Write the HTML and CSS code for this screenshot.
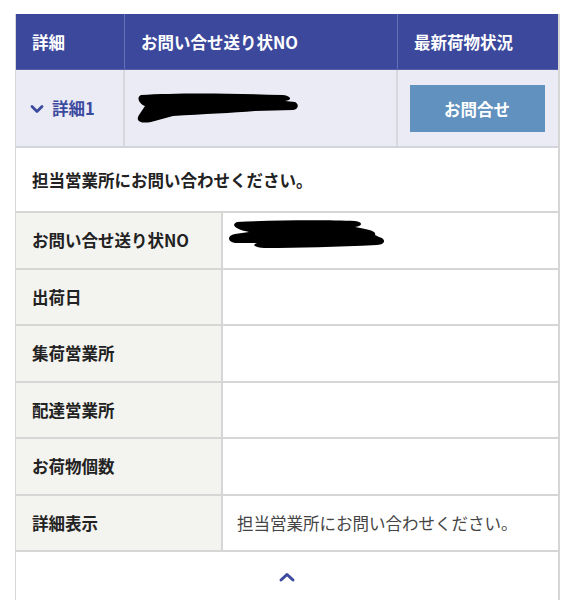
FILE: index.html
```html
<!DOCTYPE html>
<html lang="ja">
<head>
<meta charset="utf-8">
<link rel="stylesheet" href="styles.css">
</head>
<body>
<div class="wrap">
  <div class="head">
    <div class="hc c1">詳細</div>
    <div class="hc c2">お問い合せ送り状NO</div>
    <div class="hc c3">最新荷物状況</div>
  </div>
  <div class="row1">
    <div class="rc c1">
      <svg class="chev" width="14" height="10" viewBox="0 0 14 10"><path d="M2 2.5 L7 7.5 L12 2.5" fill="none" stroke="#3b4a9e" stroke-width="2.8" stroke-linecap="round" stroke-linejoin="round"/></svg>
      <span class="lbl">詳細1</span>
    </div>
    <div class="rc c2">
      <svg class="scrib" width="170" height="32" viewBox="0 0 170 32"><path d="M8 3 C40 1 90 1 150 3 C158 4 160 8 152 9 L162 10 C166 12 166 17 160 18 L122 19 C100 21 70 22 40 24 L18 30 C8 32 2 29 6 23 L12 14 C6 12 3 5 8 3 Z" fill="#000"/></svg>
    </div>
    <div class="rc c3"><button class="btn">お問合せ</button></div>
  </div>
  <div class="msg">担当営業所にお問い合わせください。</div>
  <div class="grid">
    <div class="k">お問い合せ送り状NO</div>
    <div class="v"><svg class="scrib2" width="160" height="34" viewBox="0 0 160 34"><path d="M10 5 C50 3 100 3 128 4 C136 5 136 9 128 10 C140 12 150 14 148 18 L152 20 C160 22 158 28 150 28 C110 30 70 31 40 31 C28 31 24 28 30 26 L8 26 C0 25 0 18 8 17 L22 15 C12 13 2 9 10 5 Z" fill="#000"/></svg></div>
    <div class="k">出荷日</div>
    <div class="v"></div>
    <div class="k">集荷営業所</div>
    <div class="v"></div>
    <div class="k">配達営業所</div>
    <div class="v"></div>
    <div class="k">お荷物個数</div>
    <div class="v"></div>
    <div class="k">詳細表示</div>
    <div class="v txt">担当営業所にお問い合わせください。</div>
  </div>
  <div class="foot">
    <svg width="18" height="12" viewBox="0 0 18 12"><path d="M3 9 L9 3.5 L15 9" fill="none" stroke="#3b4a9e" stroke-width="3" stroke-linecap="round" stroke-linejoin="round"/></svg>
  </div>
</div>
</body>
</html>
```
FILE: styles.css
```css
html, body { margin: 0; padding: 0; background: #fff; }
body {
  font-family: "Noto Sans CJK JP", "Noto Sans", sans-serif;
  font-size: 16.5px;
  color: #222;
}
.wrap {
  margin: 14px 0 0 15px;
  width: 545px;
  border-left: 1px solid #d6d6d6;
  border-right: 2px solid #d6d6d6;
  box-sizing: border-box;
}
.head, .row1 {
  display: grid;
  grid-template-columns: 109px 273px 1fr;
}
.head { background: #3b489c; height: 55px; border-bottom: 1px solid #5560a8; }
.hc {
  color: #fff;
  font-weight: bold;
  display: flex;
  align-items: center;
  padding-left: 16px;
  border-right: 1px solid #6670b4;
}
.hc.c3 { border-right: none; }
.row1 { background: #ebebf5; height: 78px; border-bottom: 2px solid #d4d4dc; box-sizing: border-box; }
.rc { display: flex; align-items: center; border-right: 2px solid #d7d7e0; }
.rc.c3 { border-right: none; justify-content: center; }
.rc.c1 { padding-left: 14px; gap: 8px; }
.lbl { color: #3b4a9e; font-weight: bold; }
.chev { margin-top: 1px; }
.rc.c2 { padding-left: 8px; }
.btn {
  width: 135px;
  height: 47px;
  background: #6191be;
  color: #fff;
  border: none;
  font: bold 16.5px "Noto Sans CJK JP", sans-serif;
  margin-right: 2px;
  margin-top: 1px;
}
.msg {
  height: 65px;
  display: flex;
  align-items: center;
  padding-left: 16px;
  font-weight: bold;
  border-bottom: 2px solid #d6d6d6;
  box-sizing: border-box;
}
.grid {
  display: grid;
  grid-template-columns: 207px 1fr;
  grid-auto-rows: 56.5px;
}
.k, .v {
  border-bottom: 2px solid #d6d6d6;
  display: flex;
  align-items: center;
  box-sizing: border-box;
}
.k {
  background: #f3f3ef;
  font-weight: bold;
  padding-left: 16px;
  border-right: 2px solid #d6d6d6;
}
.v { padding-left: 4px; }
.v.txt { padding-left: 14px; color: #444; }
.scrib2 { margin-top: -12px; }
.foot {
  height: 60px;
  display: flex;
  justify-content: center;
  padding-top: 19px;
  box-sizing: border-box;
}
```
